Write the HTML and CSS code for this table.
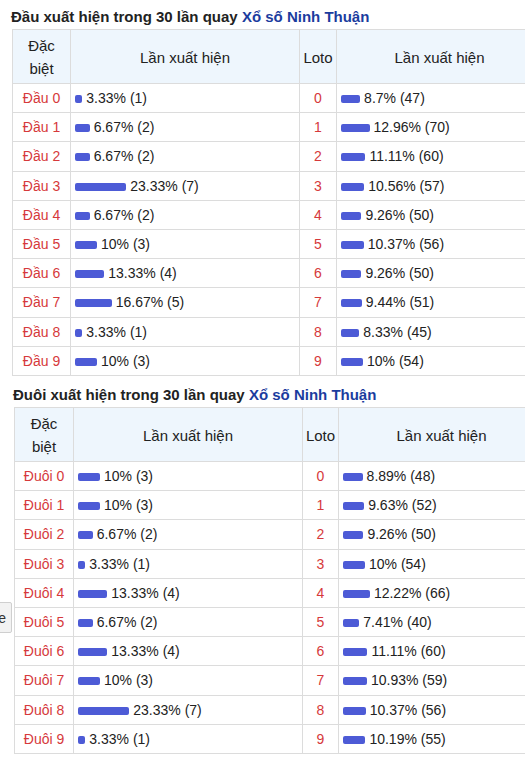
FILE: index.html
```html
<!DOCTYPE html>
<html lang="vi">
<head>
<meta charset="utf-8">
<title>Thống kê đầu đuôi Xổ số Ninh Thuận</title>
<link rel="stylesheet" href="styles.css">
</head>
<body>
<div class="page">
  <section class="block block-first">
    <h3 class="title">Đầu xuất hiện trong 30 lần quay <a href="#" class="link">Xổ số Ninh Thuận</a></h3>
    <table class="stats">
      <colgroup><col class="c1"><col class="c2"><col class="c3"><col class="c4"></colgroup>
      <thead>
        <tr><th>Đặc<br>biệt</th><th>Lần xuất hiện</th><th>Loto</th><th>Lần xuất hiện</th></tr>
      </thead>
      <tbody>
        <tr><td class="red">Đầu 0</td><td><span class="bar" style="width:7.3px"></span>3.33% (1)</td><td class="red">0</td><td><span class="bar" style="width:19.1px"></span>8.7% (47)</td></tr>
        <tr><td class="red">Đầu 1</td><td><span class="bar" style="width:14.7px"></span>6.67% (2)</td><td class="red">1</td><td><span class="bar" style="width:28.5px"></span>12.96% (70)</td></tr>
        <tr><td class="red">Đầu 2</td><td><span class="bar" style="width:14.7px"></span>6.67% (2)</td><td class="red">2</td><td><span class="bar" style="width:24.4px"></span>11.11% (60)</td></tr>
        <tr><td class="red">Đầu 3</td><td><span class="bar" style="width:51.3px"></span>23.33% (7)</td><td class="red">3</td><td><span class="bar" style="width:23.2px"></span>10.56% (57)</td></tr>
        <tr><td class="red">Đầu 4</td><td><span class="bar" style="width:14.7px"></span>6.67% (2)</td><td class="red">4</td><td><span class="bar" style="width:20.4px"></span>9.26% (50)</td></tr>
        <tr><td class="red">Đầu 5</td><td><span class="bar" style="width:22px"></span>10% (3)</td><td class="red">5</td><td><span class="bar" style="width:22.8px"></span>10.37% (56)</td></tr>
        <tr><td class="red">Đầu 6</td><td><span class="bar" style="width:29.3px"></span>13.33% (4)</td><td class="red">6</td><td><span class="bar" style="width:20.4px"></span>9.26% (50)</td></tr>
        <tr><td class="red">Đầu 7</td><td><span class="bar" style="width:36.7px"></span>16.67% (5)</td><td class="red">7</td><td><span class="bar" style="width:20.8px"></span>9.44% (51)</td></tr>
        <tr><td class="red">Đầu 8</td><td><span class="bar" style="width:7.3px"></span>3.33% (1)</td><td class="red">8</td><td><span class="bar" style="width:18.3px"></span>8.33% (45)</td></tr>
        <tr><td class="red">Đầu 9</td><td><span class="bar" style="width:22px"></span>10% (3)</td><td class="red">9</td><td><span class="bar" style="width:22px"></span>10% (54)</td></tr>
      </tbody>
    </table>
  </section>

  <section class="block block-second">
    <h3 class="title">Đuôi xuất hiện trong 30 lần quay <a href="#" class="link">Xổ số Ninh Thuận</a></h3>
    <table class="stats">
      <colgroup><col class="c1"><col class="c2"><col class="c3"><col class="c4"></colgroup>
      <thead>
        <tr><th>Đặc<br>biệt</th><th>Lần xuất hiện</th><th>Loto</th><th>Lần xuất hiện</th></tr>
      </thead>
      <tbody>
        <tr><td class="red">Đuôi 0</td><td><span class="bar" style="width:22px"></span>10% (3)</td><td class="red">0</td><td><span class="bar" style="width:19.6px"></span>8.89% (48)</td></tr>
        <tr><td class="red">Đuôi 1</td><td><span class="bar" style="width:22px"></span>10% (3)</td><td class="red">1</td><td><span class="bar" style="width:21.2px"></span>9.63% (52)</td></tr>
        <tr><td class="red">Đuôi 2</td><td><span class="bar" style="width:14.7px"></span>6.67% (2)</td><td class="red">2</td><td><span class="bar" style="width:20.4px"></span>9.26% (50)</td></tr>
        <tr><td class="red">Đuôi 3</td><td><span class="bar" style="width:7.3px"></span>3.33% (1)</td><td class="red">3</td><td><span class="bar" style="width:22px"></span>10% (54)</td></tr>
        <tr><td class="red">Đuôi 4</td><td><span class="bar" style="width:29.3px"></span>13.33% (4)</td><td class="red">4</td><td><span class="bar" style="width:26.9px"></span>12.22% (66)</td></tr>
        <tr><td class="red">Đuôi 5</td><td><span class="bar" style="width:14.7px"></span>6.67% (2)</td><td class="red">5</td><td><span class="bar" style="width:16.3px"></span>7.41% (40)</td></tr>
        <tr><td class="red">Đuôi 6</td><td><span class="bar" style="width:29.3px"></span>13.33% (4)</td><td class="red">6</td><td><span class="bar" style="width:24.4px"></span>11.11% (60)</td></tr>
        <tr><td class="red">Đuôi 7</td><td><span class="bar" style="width:22px"></span>10% (3)</td><td class="red">7</td><td><span class="bar" style="width:24px"></span>10.93% (59)</td></tr>
        <tr><td class="red">Đuôi 8</td><td><span class="bar" style="width:51.3px"></span>23.33% (7)</td><td class="red">8</td><td><span class="bar" style="width:22.8px"></span>10.37% (56)</td></tr>
        <tr><td class="red">Đuôi 9</td><td><span class="bar" style="width:7.3px"></span>3.33% (1)</td><td class="red">9</td><td><span class="bar" style="width:22.4px"></span>10.19% (55)</td></tr>
      </tbody>
    </table>
  </section>
</div>
<div class="side-tab">Xe</div>
</body>
</html>
```

FILE: styles.css
```css
html, body {
  margin: 0;
  padding: 0;
  background: #fff;
  overflow: hidden;
}
body {
  font-family: "Liberation Sans", Arial, sans-serif;
  font-size: 14px;
  color: #222;
  width: 525px;
  height: 774px;
  position: relative;
}
.page {
  padding-top: 7px;
}
.block-first {
  margin-left: 12px;
}
.block-second {
  margin-left: 14px;
  margin-top: 9px;
}
.title {
  margin: 0 0 2px -1px;
  font-size: 15px;
  line-height: 20px;
  font-weight: bold;
  color: #222;
  white-space: nowrap;
}
.link {
  color: #1b3c9e;
  text-decoration: none;
}
.stats {
  border-collapse: collapse;
  table-layout: fixed;
  width: 530px;
}
.c1 { width: 58px; }
.c2 { width: 229px; }
.c3 { width: 37px; }
.c4 { width: 206px; }
.block-second .c1 { width: 59px; }
.block-second .c3 { width: 36px; }
.stats th,
.stats td {
  border: 1px solid #dcdcdc;
  white-space: nowrap;
  overflow: hidden;
}
.stats th {
  background: #eef6fd;
  font-weight: normal;
  font-size: 15px;
  text-align: center;
  line-height: 23px;
  padding: 4px 2px 3px;
  color: #222;
}
.stats td {
  line-height: 20.2px;
  padding: 4px 4px;
  color: #222;
}
.stats td.red {
  color: #d6393b;
  text-align: center;
}
.bar {
  display: inline-block;
  height: 8px;
  background: #4d5bd6;
  border-radius: 2px;
  margin-right: 4px;
  vertical-align: 0;
}
.side-tab {
  position: absolute;
  left: -40px;
  top: 602px;
  width: 52px;
  height: 31px;
  box-sizing: border-box;
  background: #f2f2f2;
  border: 1px solid #cfcfcf;
  border-radius: 2px;
  text-align: right;
  padding-right: 5px;
  line-height: 31px;
  font-size: 14px;
  color: #333;
}
```
